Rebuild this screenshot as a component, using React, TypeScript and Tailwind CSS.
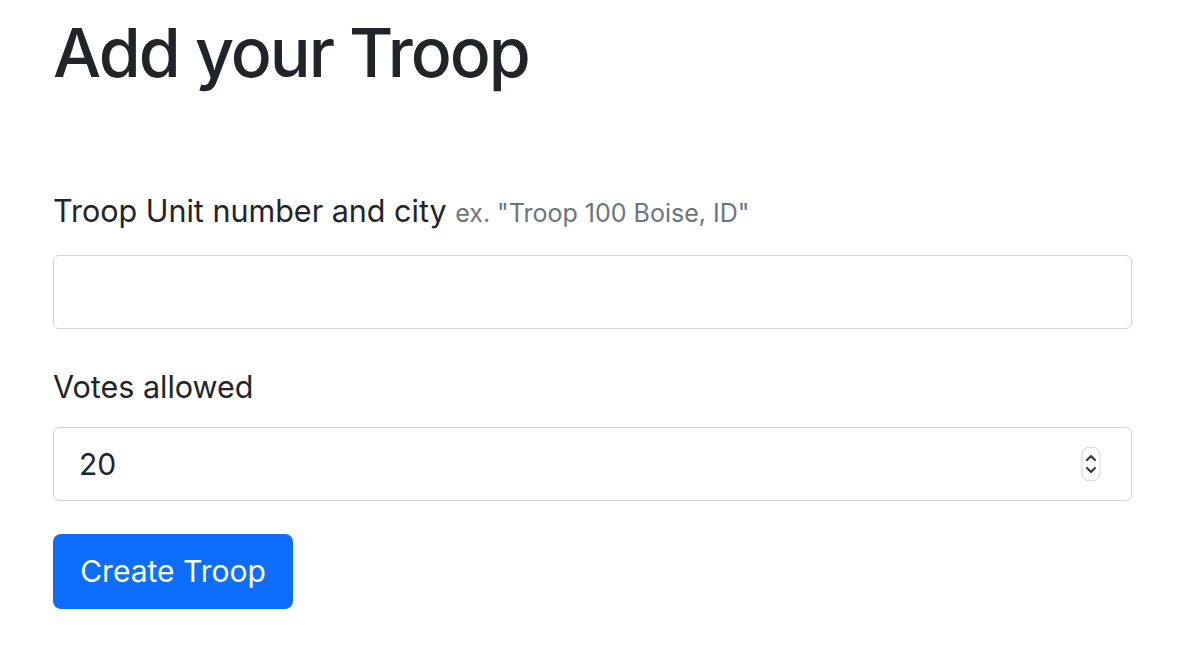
export default function App() {
  return (
    <div className="min-h-screen bg-white font-['Inter',sans-serif] text-[#212529]">
      <div className="w-[1079px] ml-[53px] pt-[10px]">
        <h1 className="text-[68px] leading-[84px] font-medium tracking-[-2px]">Add your Troop</h1>
        <form className="mt-[94px]" onSubmit={(e) => e.preventDefault()}>
          <label className="block text-[30.5px] leading-[45px] mb-[19px]">
            Troop Unit number and city{" "}
            <span className="text-[25px] text-[#6c757d]">ex. "Troop 100 Boise, ID"</span>
          </label>
          <input
            type="text"
            className="block w-full h-[74px] px-[26px] text-[30px] border-[1.5px] border-[#ced4da] rounded-[6px] outline-none"
          />
          <label className="block text-[30.5px] leading-[45px] mt-[35px] mb-[18px]">Votes allowed</label>
          <div className="flex items-center w-full h-[74px] pl-[25px] pr-[30px] border-[1.5px] border-[#ced4da] rounded-[6px]">
            <input
              type="text"
              defaultValue="20"
              className="flex-1 text-[30px] text-[#212529] outline-none bg-transparent"
            />
            <svg width="20" height="36" viewBox="0 0 20 36">
              <rect x="1" y="1" width="18" height="34" rx="8" fill="#fff" stroke="#d5d5d5" />
              <path d="M6 14 L10 10 L14 14" fill="none" stroke="#333" strokeWidth="2" strokeLinecap="round" strokeLinejoin="round" />
              <path d="M6 22 L10 26 L14 22" fill="none" stroke="#333" strokeWidth="2" strokeLinecap="round" strokeLinejoin="round" />
            </svg>
          </div>
          <button
            type="submit"
            className="mt-[33px] w-[240px] h-[75px] bg-[#0d6efd] text-white text-[30px] rounded-[8px]"
          >
            Create Troop
          </button>
        </form>
      </div>
    </div>
  );
}
